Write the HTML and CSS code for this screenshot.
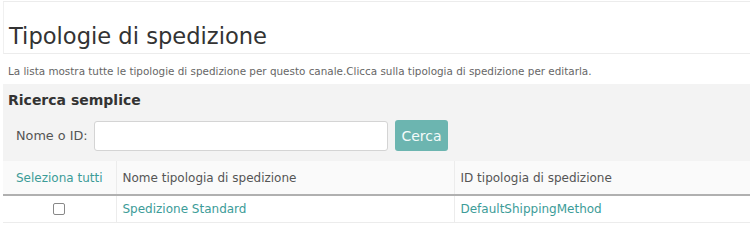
FILE: index.html
```html
<!DOCTYPE html>
<html lang="it">
<head>
<meta charset="utf-8">
<title>Tipologie di spedizione</title>
<link rel="stylesheet" href="styles.css">
</head>
<body>
<div class="page">
  <div class="head">
    <h1 class="title">Tipologie di spedizione</h1>
  </div>
  <p class="desc">La lista mostra tutte le tipologie di spedizione per questo canale.Clicca sulla tipologia di spedizione per editarla.</p>
  <div class="search">
    <h2 class="search-title">Ricerca semplice</h2>
    <form class="search-form">
      <label class="search-label" for="q">Nome o ID:</label>
      <input class="search-input" id="q" type="text">
      <button class="btn" type="button">Cerca</button>
    </form>
  </div>
  <table class="grid">
    <thead>
      <tr>
        <th class="col-sel"><a class="link" href="#">Seleziona tutti</a></th>
        <th class="col-name">Nome tipologia di spedizione</th>
        <th class="col-id">ID tipologia di spedizione</th>
      </tr>
    </thead>
    <tbody>
      <tr>
        <td class="col-sel"><span class="check"></span></td>
        <td class="col-name"><a class="link" href="#">Spedizione Standard</a></td>
        <td class="col-id"><a class="link" href="#">DefaultShippingMethod</a></td>
      </tr>
    </tbody>
  </table>
</div>
</body>
</html>
```
FILE: styles.css
```css
* { box-sizing: border-box; }
html, body { margin: 0; padding: 0; background: #fff; }
body {
  font-family: "DejaVu Sans", Verdana, sans-serif;
  color: #333;
  overflow: hidden;
}
.page {
  margin-left: 3px;
  border-top: 1px solid #ececec;
  margin-top: 1px;
}
.head {
  border-left: 1px solid #f0f0f0;
  border-bottom: 1px solid #ececec;
  height: 52px;
  padding: 20px 0 0 5px;
}
.title {
  margin: 0;
  font-size: 22.6px;
  font-weight: normal;
  line-height: 28px;
  color: #333;
}
.desc {
  margin: 0;
  height: 30px;
  padding: 10px 0 0 5px;
  font-size: 10.4px;
  line-height: 14px;
  color: #666;
}
.search {
  background: #f3f3f3;
  height: 77px;
  padding: 7px 0 0 5px;
}
.search-title {
  margin: 0;
  font-size: 14px;
  line-height: 18px;
  font-weight: bold;
  color: #333;
}
.search-form {
  display: flex;
  align-items: center;
  margin-top: 11px;
  padding-left: 8px;
}
.search-label {
  font-size: 12.8px;
  color: #555;
  width: 78px;
}
.search-input {
  width: 294px;
  height: 30px;
  border: 1px solid #d4d4d4;
  border-radius: 3px;
  background: #fff;
  margin: 0;
}
.btn {
  margin-left: 7px;
  width: 53px;
  height: 31px;
  border: 0;
  border-radius: 3px;
  background: #6cb5b0;
  color: #f4fbfa;
  font-family: inherit;
  font-size: 14px;
  padding: 0;
}
.grid {
  width: 100%;
  border-collapse: collapse;
  font-size: 12px;
}
.grid th {
  background: #fafafa;
  height: 34px;
  font-weight: normal;
  text-align: left;
  color: #555;
  border-bottom: 2px solid #b0b0b0;
  padding: 0 6px;
}
.grid td {
  height: 27px;
  border-bottom: 1px solid #ececec;
  padding: 0 6px;
}
.grid th + th, .grid td + td { border-left: 1px solid #ececec; }
.col-sel { width: 113px; text-align: center !important; }
.grid th.col-sel { padding: 0 4px; }
.col-name { width: 338px; }
.link { color: #3c9c98; text-decoration: none; }
.check {
  display: inline-block;
  width: 12px;
  height: 12px;
  border: 1px solid #888;
  border-radius: 2px;
  background: #fff;
  vertical-align: middle;
}
```
